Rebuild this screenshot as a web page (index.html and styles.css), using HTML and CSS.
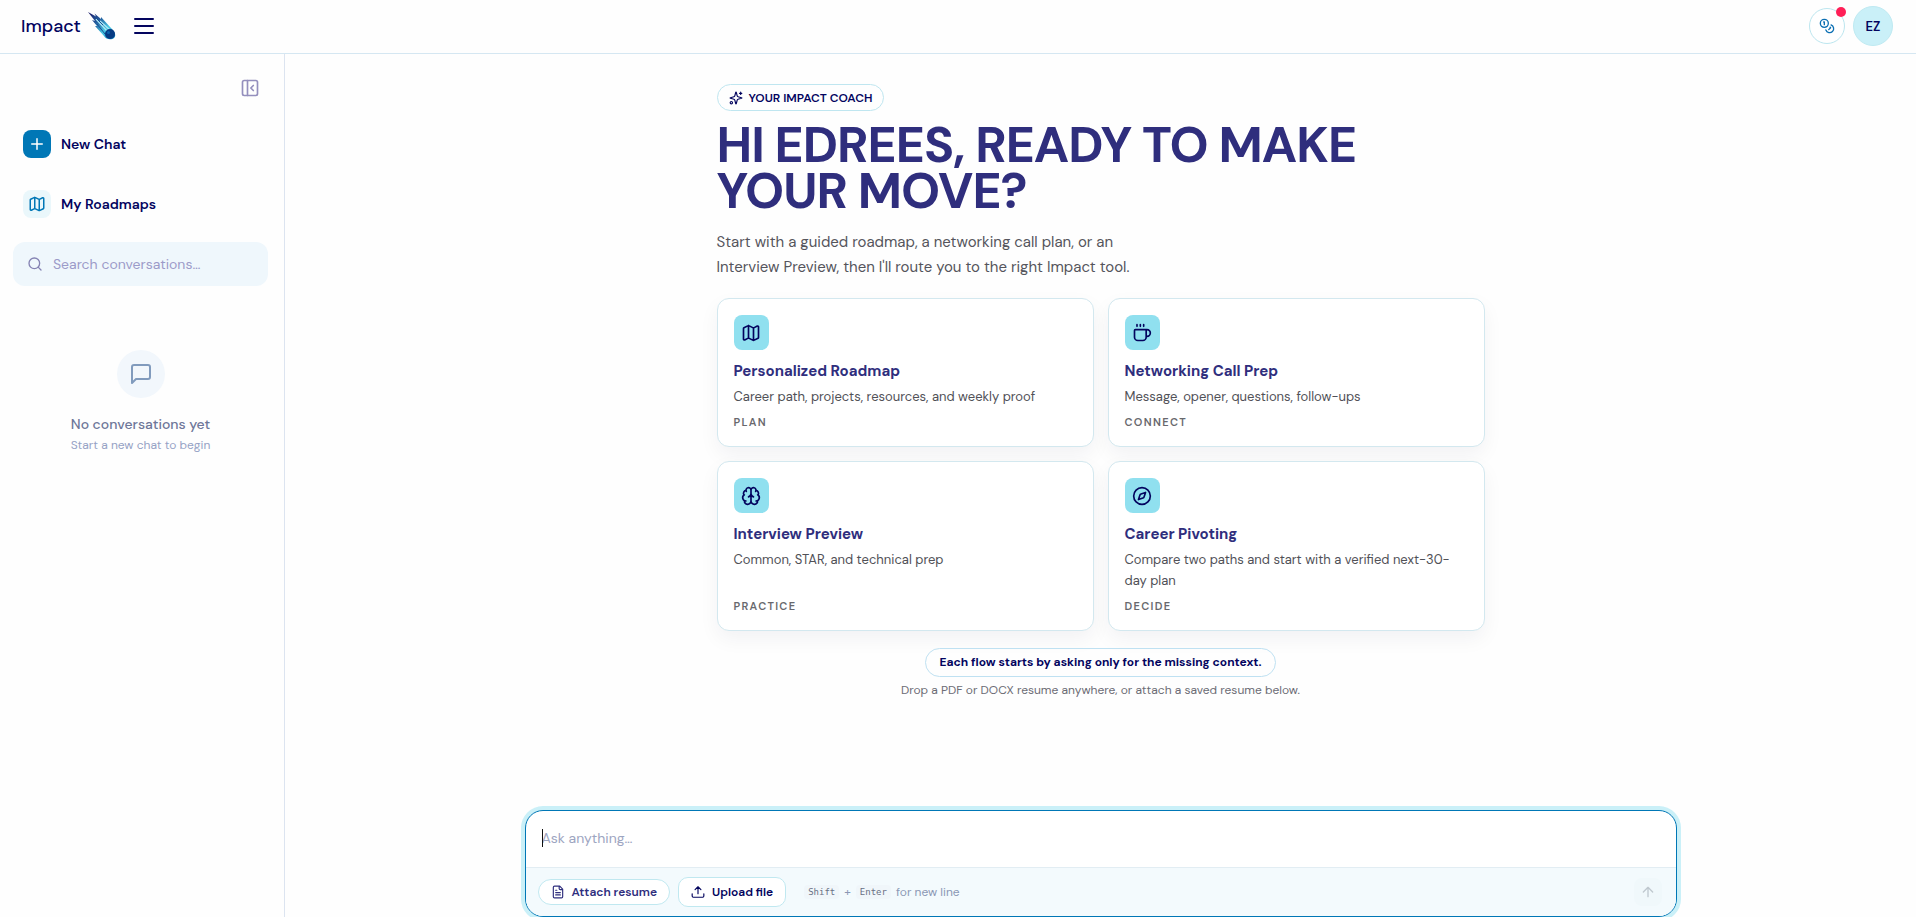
FILE: index.html
```html
<!DOCTYPE html>
<html lang="en">
<head>
<meta charset="utf-8">
<meta name="viewport" content="width=device-width, initial-scale=1">
<title>Impact</title>
<link rel="stylesheet" href="styles.css">
</head>
<body>
<svg class="defs" aria-hidden="true">
  <symbol id="map" viewBox="0 0 24 24"><path d="M14.1 5.55a2 2 0 0 0 1.8 0l3.65-1.83A1 1 0 0 1 21 4.62v12.76a1 1 0 0 1-.55.9l-4.55 2.27a2 2 0 0 1-1.8 0l-4.2-2.1a2 2 0 0 0-1.8 0l-3.65 1.83A1 1 0 0 1 3 19.38V6.62a1 1 0 0 1 .55-.9L8.1 3.45a2 2 0 0 1 1.8 0zM15 5.76v15M9 3.24v15"/></symbol>
</svg>
<div class="app">
  <header class="topbar">
    <a class="brand" href="#">Impact
      <svg class="comet" viewBox="0 0 28 28" aria-hidden="true">
        <defs><linearGradient id="tail" x1="0" y1="0" x2="1" y2="1"><stop offset="0" stop-color="#1b1464"/><stop offset=".35" stop-color="#245f9f"/><stop offset=".65" stop-color="#48cae4"/><stop offset="1" stop-color="#0077b6"/></linearGradient></defs>
        <path d="M0 0 8 4.500 6.500 1.500 13 7l0-2 10 11c5 5 5 8 3 10s-8 2-10-2L7 14l2 0-5-6 3 1z" fill="url(#tail)"/>
        <path d="M8 7 19 19M12 9l11 10" stroke="#ade8f4" stroke-width="1.300" fill="none"/>
        <path d="M9 12l8 10M6 4l9 9" stroke="#1a4f94" stroke-width="1" fill="none"/>
        <circle cx="22" cy="22" r="5" fill="#063b83"/><circle cx="20.500" cy="20.500" r="1.500" fill="#0b63ad"/>
      </svg>
    </a>
    <button class="plain menu" aria-label="Menu"><svg viewBox="0 0 20 16"><path d="M1 1h18M1 8h18M1 15h18"/></svg></button>
    <div class="account">
      <button class="credits" aria-label="Credits">
        <svg class="icon" viewBox="0 0 24 24"><circle cx="8" cy="8" r="6"/><path d="M18.090 10.370A6 6 0 1 1 10.340 18M7 6h1v4M16.710 13.880l.7.710-2.820 2.820"/></svg>
        <span class="dot"></span>
      </button>
      <button class="avatar" aria-label="Account">EZ</button>
    </div>
  </header>
  <div class="body">
    <aside class="sidebar">
      <button class="plain collapse" aria-label="Collapse sidebar"><svg class="icon" viewBox="0 0 24 24"><rect x="3" y="3" width="18" height="18" rx="2"/><path d="M9 3v18M16 15l-3-3 3-3"/></svg></button>
      <nav class="nav">
        <a href="#"><span class="tile solid"><svg class="icon" viewBox="0 0 24 24"><path d="M5 12h14M12 5v14"/></svg></span>New Chat</a>
        <a href="#"><span class="tile"><svg class="icon"><use href="#map"/></svg></span>My Roadmaps</a>
      </nav>
      <label class="search">
        <svg class="icon" viewBox="0 0 24 24"><circle cx="11" cy="11" r="8"/><path d="m21 21-4.300-4.300"/></svg>
        <input type="text" aria-label="Search conversations" placeholder="Search conversations…">
      </label>
      <div class="empty">
        <span class="bubble"><svg class="icon" viewBox="0 0 24 24"><path d="M21 15a2 2 0 0 1-2 2H7l-4 4V5a2 2 0 0 1 2-2h14a2 2 0 0 1 2 2z"/></svg></span>
        <strong>No conversations yet</strong>
        <span>Start a new chat to begin</span>
      </div>
    </aside>
    <main class="main">
      <section class="welcome">
        <div class="coach">
          <svg class="icon" viewBox="0 0 24 24"><path d="M9.940 15.500A2 2 0 0 0 8.500 14.060l-6.140-1.580a.5.5 0 0 1 0-.96L8.500 9.940A2 2 0 0 0 9.940 8.500l1.580-6.140a.5.5 0 0 1 .96 0l1.580 6.140a2 2 0 0 0 1.440 1.440l6.140 1.580a.5.5 0 0 1 0 .96l-6.140 1.580a2 2 0 0 0-1.440 1.440l-1.580 6.140a.5.5 0 0 1-.96 0zM20 2v4M22 4h-4"/><circle cx="4" cy="20" r="2"/></svg>
          YOUR IMPACT COACH
        </div>
        <h1>HI EDREES, READY TO MAKE YOUR MOVE?</h1>
        <p class="intro">Start with a guided roadmap, a networking call plan, or an Interview Preview, then I'll route you to the right Impact tool.</p>
        <div class="cards">
          <button class="card">
            <span class="badge"><svg class="icon"><use href="#map"/></svg></span>
            <strong>Personalized Roadmap</strong>
            <span class="desc">Career path, projects, resources, and weekly proof</span>
            <span class="tag">PLAN</span>
          </button>
          <button class="card">
            <span class="badge"><svg class="icon" viewBox="0 0 24 24"><path d="M10 2v2M14 2v2M6 2v2M16 8a1 1 0 0 1 1 1v8a4 4 0 0 1-4 4H7a4 4 0 0 1-4-4V9a1 1 0 0 1 1-1h14a4 4 0 1 1 0 8h-1"/></svg></span>
            <strong>Networking Call Prep</strong>
            <span class="desc">Message, opener, questions, follow-ups</span>
            <span class="tag">CONNECT</span>
          </button>
          <button class="card">
            <span class="badge"><svg class="icon" viewBox="0 0 24 24"><path d="M12 18V5M15 13a4.170 4.170 0 0 1-3-4 4.170 4.170 0 0 1-3 4M17.600 6.500A3 3 0 1 0 12 5a3 3 0 1 0-5.600 1.500M18 5.130a4 4 0 0 1 2.530 5.770M18 18a4 4 0 0 0 2-7.460M19.970 17.480A4 4 0 1 1 12 18a4 4 0 1 1-7.970-.52M6 18a4 4 0 0 1-2-7.460M6 5.130a4 4 0 0 0-2.530 5.770"/></svg></span>
            <strong>Interview Preview</strong>
            <span class="desc">Common, STAR, and technical prep</span>
            <span class="tag">PRACTICE</span>
          </button>
          <button class="card">
            <span class="badge"><svg class="icon" viewBox="0 0 24 24"><circle cx="12" cy="12" r="10"/><path d="m16.240 7.760-1.800 5.410a2 2 0 0 1-1.270 1.270l-5.410 1.800 1.800-5.410a2 2 0 0 1 1.270-1.270z"/></svg></span>
            <strong>Career Pivoting</strong>
            <span class="desc">Compare two paths and start with a verified next-30-day plan</span>
            <span class="tag">DECIDE</span>
          </button>
        </div>
        <div class="notes">
          <span class="note">Each flow starts by asking only for the missing context.</span>
          <span class="drop">Drop a PDF or DOCX resume anywhere, or attach a saved resume below.</span>
        </div>
      </section>
      <form class="composer">
        <div class="prompt">
          <span class="caret"></span>
          <textarea rows="1" aria-label="Message" placeholder="Ask anything…"></textarea>
        </div>
        <div class="tools">
          <button type="button" class="tool attach"><svg class="icon" viewBox="0 0 24 24"><path d="M15 2H6a2 2 0 0 0-2 2v16a2 2 0 0 0 2 2h12a2 2 0 0 0 2-2V7zM14 2v4a2 2 0 0 0 2 2h4M10 9H8M16 13H8M16 17H8"/></svg>Attach resume</button>
          <button type="button" class="tool upload"><svg class="icon" viewBox="0 0 24 24"><path d="M12 15V3M7 8l5-5 5 5M2 15v4a2 2 0 0 0 2 2h16a2 2 0 0 0 2-2v-4"/></svg>Upload file</button>
          <span class="hint"><kbd>Shift</kbd><span class="plus">+</span><kbd>Enter</kbd>for new line</span>
          <button class="send" aria-label="Send" disabled><svg class="icon" viewBox="0 0 24 24"><path d="m5 12 7-7 7 7M12 19V5"/></svg></button>
        </div>
      </form>
    </main>
  </div>
</div>
</body>
</html>
```
FILE: styles.css
```css
* { box-sizing: border-box; }
body { margin: 0; background: #fefefe; color: #03045e; font-family: "DM Sans", Inter, sans-serif; font-size: 14px; }
button, input, textarea { font: inherit; color: inherit; }
button { cursor: pointer; }
a { color: inherit; text-decoration: none; }
.defs { display: none; }
.icon { width: 16px; height: 16px; flex: none; fill: none; stroke: currentColor; stroke-width: 2; stroke-linecap: round; stroke-linejoin: round; }
.plain { display: flex; padding: 0; border: 0; background: none; }

.app { display: flex; flex-direction: column; height: 100vh; overflow: hidden; }
.topbar { display: flex; align-items: center; height: 54px; flex: none; padding: 0 23px 1px 21px; border-bottom: 1px solid #d5e7f2; }
.brand { display: flex; align-items: center; gap: 7px; font-size: 18px; font-weight: 500; }
.comet { width: 28px; height: 28px; }
.menu { margin-left: 18px; }
.menu svg { width: 20px; height: 16px; fill: none; stroke: #03045e; stroke-width: 2; stroke-linecap: round; }
.account { display: flex; align-items: center; gap: 8px; margin-left: auto; }
.credits { position: relative; display: grid; place-items: center; width: 36px; height: 36px; padding: 0; border: 1px solid #bce6ef; border-radius: 50%; background: #fff; color: #0b6fb3; }
.dot { position: absolute; top: -2px; right: -2px; width: 10px; height: 10px; border-radius: 50%; background: #ff1f57; }
.avatar { width: 40px; height: 40px; padding: 0; border: 1px solid #bfeaf2; border-radius: 50%; background: #caf0f8; font-size: 13px; font-weight: 600; }

.body { display: flex; flex: 1; min-height: 0; }
.sidebar { display: flex; flex-direction: column; width: 285px; flex: none; padding: 24px 16px 0 13px; border-right: 1px solid #dce4f0; }
.collapse { align-self: flex-end; margin-right: 8px; color: #948fbd; }
.collapse .icon { width: 20px; height: 20px; }
.nav { display: flex; flex-direction: column; gap: 16px; margin-top: 24px; }
.nav a { display: flex; align-items: center; gap: 10px; height: 44px; padding: 0 10px; font-weight: 600; }
.tile { display: grid; place-items: center; width: 28px; height: 28px; border-radius: 8px; background: #eaf7fb; color: #0077b6; }
.tile .icon { width: 18px; height: 18px; }
.tile.solid { background: #0077b6; color: #fff; }
.search { display: flex; align-items: center; gap: 10px; height: 44px; margin-top: 16px; padding: 0 14px; border-radius: 12px; background: #eff7fc; color: #8583b3; }
.search input { flex: 1; min-width: 0; padding: 0; border: 0; outline: 0; background: none; }
.search input::placeholder { color: #9c9bc9; opacity: 1; }
.empty { display: flex; flex-direction: column; align-items: center; margin-top: 64px; color: #96a2c5; font-size: 12px; line-height: 20px; }
.empty strong { margin-top: 15px; color: #6e7799; font-size: 14px; font-weight: 500; line-height: 22px; }
.bubble { display: grid; place-items: center; width: 48px; height: 48px; border-radius: 50%; background: #f2f7fc; color: #819bbd; }
.bubble .icon { width: 24px; height: 24px; }

.main { display: flex; flex-direction: column; flex: 1; min-width: 0; padding: 30px 24px 0; }
.welcome { display: flex; flex-direction: column; width: 100%; max-width: 768px; margin: 0 auto; }
.coach { display: flex; align-self: flex-start; align-items: center; gap: 6px; height: 27px; padding: 0 11px; border: 1px solid #bfe6f0; border-radius: 14px; font-size: 12px; font-weight: 600; }
.coach .icon { width: 14px; height: 14px; }
h1 { max-width: 680px; margin: 11px 0 16px; color: #2f2e7d; font-size: 50px; font-weight: 700; line-height: 46px; letter-spacing: -1px; }
.intro { max-width: 440px; margin: 0; color: #55555c; font-size: 15px; line-height: 25px; }
.cards { display: grid; grid-template-columns: 1fr 1fr; gap: 14px; margin-top: 18px; }
.card { display: flex; flex-direction: column; align-items: flex-start; padding: 16px; border: 1px solid #d3e8ef; border-radius: 12px; background: #fff; box-shadow: 0 8px 20px rgba(20, 20, 60, .05); text-align: left; }
.badge { display: grid; place-items: center; width: 35px; height: 35px; border-radius: 8px; background: #90e0ef; }
.badge .icon { width: 20px; height: 20px; }
.card strong { margin-top: 9px; color: #2f2e7d; font-size: 15px; font-weight: 700; line-height: 24px; }
.desc { margin-top: 3px; color: #515157; font-size: 13px; line-height: 21px; }
.tag { margin-top: auto; padding-top: 7px; color: #68686d; font-size: 11px; font-weight: 600; line-height: 16px; letter-spacing: 0.12em; }
.notes { display: flex; flex-direction: column; align-items: center; gap: 5px; margin-top: 17px; color: #6c6c75; font-size: 12px; line-height: 17px; }
.note { padding: 5px 14px; border: 1px solid #bfe1f2; border-radius: 15px; color: #03045e; font-weight: 700; }

.composer { width: 100%; max-width: 1152px; margin: auto auto 0; overflow: hidden; border: 1px solid #0077b6; border-radius: 18px; background: #fff; box-shadow: 0 0 0 4px #caf0f8; }
.prompt { position: relative; display: flex; padding: 15px 16px 17px; }
.caret { position: absolute; left: 16px; top: 18px; width: 1px; height: 18px; background: #111; }
.prompt textarea { flex: 1; height: 24px; padding: 0; border: 0; outline: 0; resize: none; background: none; line-height: 24px; }
.prompt textarea::placeholder { color: #9da5c1; opacity: 1; }
.tools { display: flex; align-items: center; gap: 8px; height: 49px; padding: 0 14px 0 12px; border-top: 1px solid #e2edf3; background: #f3fafd; }
.tool { display: flex; align-items: center; border: 1px solid #c0e8f0; background: #fff; font-size: 12px; font-weight: 600; }
.tool .icon { width: 14px; height: 14px; }
.attach { gap: 7px; height: 26px; padding: 0 12px; border-radius: 13px; color: #2f2e7d; }
.upload { gap: 7px; height: 30px; padding: 0 12px; border-radius: 10px; }
.hint { display: flex; align-items: center; gap: 5px; margin-left: 10px; color: #8b98b5; font-size: 12px; }
kbd { padding: 2px 4px; border-radius: 4px; background: #f0f6fa; color: #687084; font: 9px "DejaVu Sans Mono", monospace; }
.send { display: grid; place-items: center; width: 28px; height: 28px; margin-left: auto; padding: 0; border: 0; border-radius: 8px; background: #f0f8fb; color: #bfc8cf; }
```
